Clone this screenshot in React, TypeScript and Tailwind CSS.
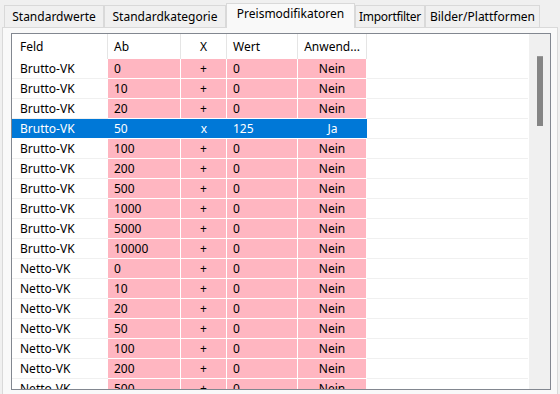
import React from 'react';

type Row = { feld: string; ab: string; x: string; wert: string; anw: string; sel?: boolean };

const TABS = [
  { label: 'Standardwerte', w: 'w-[100px]' },
  { label: 'Standardkategorie', w: 'w-[122px]' },
  { label: 'Preismodifikatoren', w: 'w-[129px]', active: true },
  { label: 'Importfilter', w: 'w-[70px] tracking-[-0.3px]' },
  { label: 'Bilder/Plattformen', w: 'w-[115px]' },
];

const STEPS = ['0', '10', '20', '50', '100', '200', '500', '1000', '5000', '10000'];

const ROWS: Row[] = [
  ...STEPS.map((ab) =>
    ab === '50'
      ? { feld: 'Brutto-VK', ab, x: 'x', wert: '125', anw: 'Ja', sel: true }
      : { feld: 'Brutto-VK', ab, x: '+', wert: '0', anw: 'Nein' },
  ),
  ...STEPS.slice(0, 7).map((ab) => ({ feld: 'Netto-VK', ab, x: '+', wert: '0', anw: 'Nein' })),
];

function DataRow({ row }: { row: Row }) {
  const cell = row.sel
    ? 'bg-[#0078d7] text-white border-b border-white'
    : 'bg-[#ffb6c1] text-black border-b border-r border-white';
  return (
    <div className="flex h-[20px] shrink-0 leading-[19px]">
      <div
        className={`w-[96px] shrink-0 pl-[8px] border-b ${
          row.sel ? 'bg-[#0078d7] text-white border-white' : 'bg-white border-[#f0f0f0]'
        }`}
      >
        {row.feld}
      </div>
      <div className={`w-[73px] shrink-0 pl-[6px] ${cell}`}>{row.ab}</div>
      <div className={`w-[46px] shrink-0 text-center ${cell}`}>{row.x}</div>
      <div className={`w-[71px] shrink-0 pl-[6px] ${cell}`}>{row.wert}</div>
      <div className={`w-[69px] shrink-0 text-center ${cell}`}>{row.anw}</div>
      <div className="flex-1 border-b border-[#f0f0f0] mr-[1px]" />
    </div>
  );
}

export default function App() {
  return (
    <div
      className="w-[560px] h-[394px] overflow-hidden bg-[#f0f0f0] text-[12px] text-black"
      style={{ fontFamily: '"Noto Sans", "Liberation Sans", sans-serif' }}
    >
      {/* Tabs */}
      <div className="flex items-end h-[27px] pl-[4px]">
        {TABS.map((t) =>
          t.active ? (
            <div
              key={t.label}
              className={`${t.w} h-[25px] -mb-px relative z-10 bg-[#f9f9f9] border border-b-0 border-[#d9d9d9] text-center pt-[1px] leading-[18px] whitespace-nowrap`}
            >
              {t.label}
            </div>
          ) : (
            <div
              key={t.label}
              className={`${t.w} h-[22px] bg-[#f0f0f0] border border-b-0 border-[#d9d9d9] text-center pt-[2px] leading-[18px] whitespace-nowrap`}
            >
              {t.label}
            </div>
          ),
        )}
      </div>

      {/* Panel */}
      <div className="ml-[2px] w-[556px] h-[400px] bg-[#f9f9f9] border border-[#d9d9d9] pl-[8px] pt-[5px]">
        <div className="w-[540px] h-[357px] border border-[#828790] bg-white flex overflow-hidden">
          <div className="flex-1 flex flex-col overflow-hidden">
            {/* Header */}
            <div className="flex h-[25px] shrink-0 leading-[25px] bg-white">
              <div className="w-[96px] shrink-0 pl-[8px] border-r border-[#e5e5e5]">Feld</div>
              <div className="w-[73px] shrink-0 pl-[6px] border-r border-[#e5e5e5]">Ab</div>
              <div className="w-[46px] shrink-0 text-center border-r border-[#e5e5e5]">X</div>
              <div className="w-[71px] shrink-0 pl-[6px] border-r border-[#e5e5e5]">Wert</div>
              <div className="w-[69px] shrink-0 text-center border-r border-[#e5e5e5]">Anwend...</div>
              <div className="flex-1" />
            </div>
            {ROWS.map((r, i) => (
              <DataRow key={i} row={r} />
            ))}
          </div>
          {/* Scrollbar */}
          <div className="w-[21px] shrink-0 bg-[#f0f0f0] pt-[22px] flex justify-center">
            <div className="w-[6px] h-[70px] bg-[#858585] border-t border-[#999]" />
          </div>
        </div>
      </div>
    </div>
  );
}
